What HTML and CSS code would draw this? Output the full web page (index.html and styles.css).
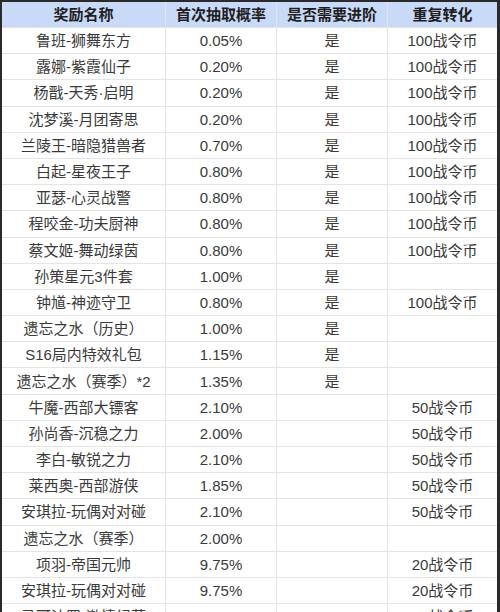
FILE: index.html
```html
<!DOCTYPE html>
<html lang="zh">
<head>
<meta charset="utf-8">
<link rel="stylesheet" href="styles.css">
</head>
<body>
<div class="sheet">
  <div class="cell head">奖励名称</div><div class="cell head">首次抽取概率</div><div class="cell head">是否需要进阶</div><div class="cell head">重复转化</div>
  <div class="cell">鲁班-狮舞东方</div><div class="cell">0.05%</div><div class="cell">是</div><div class="cell">100战令币</div>
  <div class="cell">露娜-紫霞仙子</div><div class="cell">0.20%</div><div class="cell">是</div><div class="cell">100战令币</div>
  <div class="cell">杨戬-天秀·启明</div><div class="cell">0.20%</div><div class="cell">是</div><div class="cell">100战令币</div>
  <div class="cell">沈梦溪-月团寄思</div><div class="cell">0.20%</div><div class="cell">是</div><div class="cell">100战令币</div>
  <div class="cell">兰陵王-暗隐猎兽者</div><div class="cell">0.70%</div><div class="cell">是</div><div class="cell">100战令币</div>
  <div class="cell">白起-星夜王子</div><div class="cell">0.80%</div><div class="cell">是</div><div class="cell">100战令币</div>
  <div class="cell">亚瑟-心灵战警</div><div class="cell">0.80%</div><div class="cell">是</div><div class="cell">100战令币</div>
  <div class="cell">程咬金-功夫厨神</div><div class="cell">0.80%</div><div class="cell">是</div><div class="cell">100战令币</div>
  <div class="cell">蔡文姬-舞动绿茵</div><div class="cell">0.80%</div><div class="cell">是</div><div class="cell">100战令币</div>
  <div class="cell">孙策星元3件套</div><div class="cell">1.00%</div><div class="cell">是</div><div class="cell"></div>
  <div class="cell">钟馗-神迹守卫</div><div class="cell">0.80%</div><div class="cell">是</div><div class="cell">100战令币</div>
  <div class="cell">遗忘之水（历史）</div><div class="cell">1.00%</div><div class="cell">是</div><div class="cell"></div>
  <div class="cell">S16局内特效礼包</div><div class="cell">1.15%</div><div class="cell">是</div><div class="cell"></div>
  <div class="cell">遗忘之水（赛季）*2</div><div class="cell">1.35%</div><div class="cell">是</div><div class="cell"></div>
  <div class="cell">牛魔-西部大镖客</div><div class="cell">2.10%</div><div class="cell"></div><div class="cell">50战令币</div>
  <div class="cell">孙尚香-沉稳之力</div><div class="cell">2.00%</div><div class="cell"></div><div class="cell">50战令币</div>
  <div class="cell">李白-敏锐之力</div><div class="cell">2.10%</div><div class="cell"></div><div class="cell">50战令币</div>
  <div class="cell">莱西奥-西部游侠</div><div class="cell">1.85%</div><div class="cell"></div><div class="cell">50战令币</div>
  <div class="cell">安琪拉-玩偶对对碰</div><div class="cell">2.10%</div><div class="cell"></div><div class="cell">50战令币</div>
  <div class="cell">遗忘之水（赛季）</div><div class="cell">2.00%</div><div class="cell"></div><div class="cell"></div>
  <div class="cell">项羽-帝国元帅</div><div class="cell">9.75%</div><div class="cell"></div><div class="cell">20战令币</div>
  <div class="cell">安琪拉-玩偶对对碰</div><div class="cell">9.75%</div><div class="cell"></div><div class="cell">20战令币</div>
  <div class="cell">马可波罗-激情绿茵</div><div class="cell">9.75%</div><div class="cell"></div><div class="cell">20战令币</div>
</div>
</body>
</html>
```
FILE: styles.css
```css
html, body {
  margin: 0;
  padding: 0;
  background: #ffffff;
  overflow: hidden;
}
body {
  width: 500px;
  height: 612px;
}
.sheet {
  display: grid;
  grid-template-columns: 163px 110px 110px 109px;
  grid-template-rows: 25px;
  grid-auto-rows: 25.2px;
  gap: 1px;
  background: #e4e4e4;
  border-top: 2px solid #2a2a2a;
  border-left: 2px solid #2a2a2a;
  border-right: 3px solid #2a2a2a;
  width: 495px;
  font-family: "Liberation Sans", "Noto Sans CJK SC", sans-serif;
  font-size: 15px;
  color: #3a3a3a;
}
.cell {
  background: #ffffff;
  display: flex;
  align-items: center;
  justify-content: center;
  white-space: nowrap;
  line-height: 1;
}
.head {
  background: #c9daf8;
  font-weight: bold;
  color: #1e1e1e;
}
```
